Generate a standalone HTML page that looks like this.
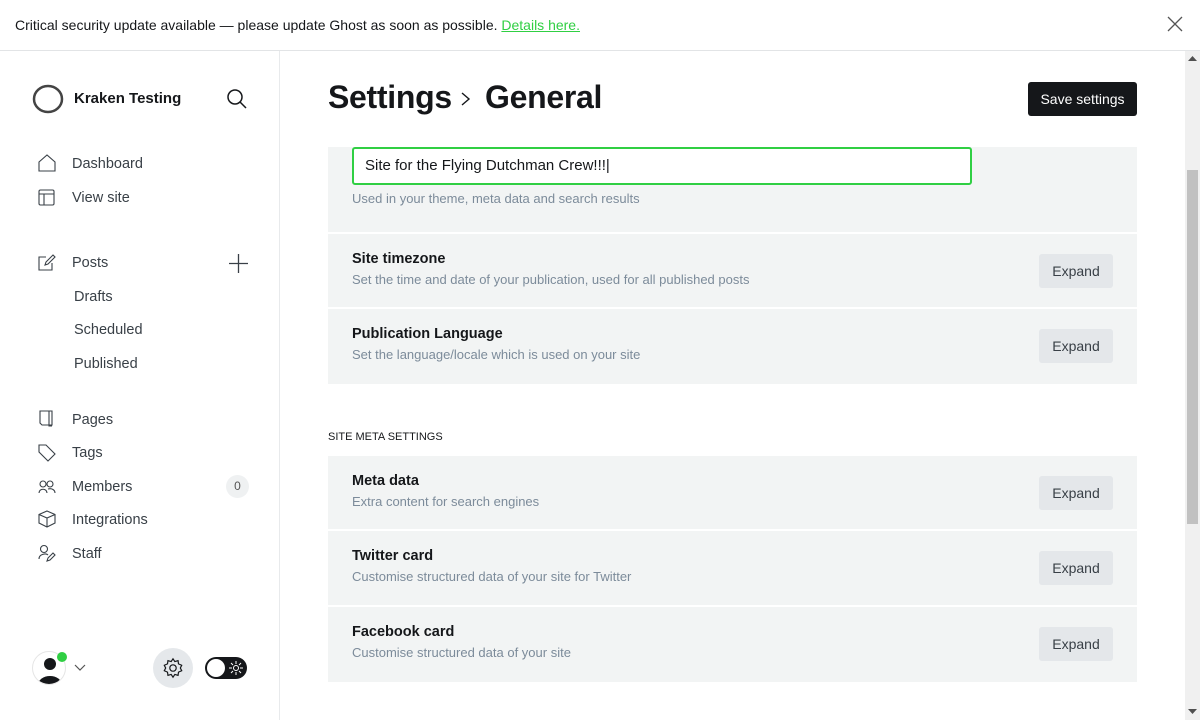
<!DOCTYPE html>
<html><head><meta charset="utf-8"><style>
*{box-sizing:border-box;margin:0;padding:0}
body{width:1200px;height:720px;overflow:hidden;background:#fff;font-family:"Liberation Sans",sans-serif;color:#15171a;position:relative}
.abs{position:absolute}
.banner{left:0;top:0;width:1200px;height:51px;border-bottom:1px solid #e2e4e6;font-size:14px;line-height:50px;padding-left:15px;color:#15171a}
.banner a{color:#30cf43;text-decoration:underline}
.side{left:0;top:51px;width:280px;height:669px;border-right:1px solid #e8eaec}
.nav{font-size:14.5px;color:#394047}
.sb{left:1185px;top:51px;width:15px;height:669px;background:#f0f0f0}
.card{left:328px;width:809px;background:#f2f4f4}
.row{position:absolute;left:0;width:809px;height:75px;border-top:2px solid #fff}
.row h4{position:absolute;left:24px;top:17px;font-size:14.5px;font-weight:bold;color:#15171a}
.row p{position:absolute;left:24px;top:38px;font-size:13px;color:#7c8b9a}
.btn{position:absolute;left:711px;top:20px;width:74px;height:34px;background:#e4e7ea;border-radius:3px;font-size:14px;line-height:34px;text-align:center;color:#394047}
</style></head><body>
<div class="abs banner">Critical security update available — please update Ghost as soon as possible. <a>Details here.</a></div>
<svg class="abs" style="left:1167px;top:16px" width="16" height="16"><path d="M1 1L15 15M15 1L1 15" stroke="#555" stroke-width="1.3"/></svg>

<div class="abs side"></div>
<svg class="abs" style="left:32px;top:84px" width="32" height="30"><ellipse cx="16" cy="15" rx="14" ry="13" fill="none" stroke="#444" stroke-width="2.5"/></svg>
<div class="abs" style="left:74px;top:90px;font-size:15px;font-weight:bold">Kraken Testing</div>
<svg class="abs" style="left:227px;top:89px" width="20" height="20"><circle cx="8" cy="8" r="7" fill="none" stroke="#15171a" stroke-width="1.5"/><path d="M13 13L19 19" stroke="#15171a" stroke-width="1.5"/></svg>

<div class="abs nav" style="left:72px;top:156px">Dashboard</div>
<svg class="abs" style="left:38px;top:154px" width="18" height="18"><path d="M1 8L9 1L17 8V17H1Z" fill="none" stroke="#394047" stroke-width="1.1"/></svg>
<div class="abs nav" style="left:72px;top:190px">View site</div>
<svg class="abs" style="left:38px;top:189px" width="18" height="18"><rect x="1" y="1" width="15" height="15" rx="1.5" fill="none" stroke="#394047" stroke-width="1.1"/><path d="M1 5H16M6 5V16" stroke="#394047" stroke-width="1.1"/></svg>
<div class="abs nav" style="left:72px;top:255px">Posts</div>
<svg class="abs" style="left:38px;top:254px" width="18" height="18"><path d="M8 3H1V16H14V9M7 11L8 8L15 1L17 3L10 10Z" fill="none" stroke="#394047" stroke-width="1.1"/></svg>
<svg class="abs" style="left:229px;top:254px" width="19" height="19"><path d="M9.5 0V19M0 9.5H19" stroke="#394047" stroke-width="1.3"/></svg>
<div class="abs nav" style="left:74px;top:289px">Drafts</div>
<div class="abs nav" style="left:74px;top:322px">Scheduled</div>
<div class="abs nav" style="left:74px;top:356px">Published</div>
<div class="abs nav" style="left:72px;top:412px">Pages</div>
<svg class="abs" style="left:39px;top:410px" width="16" height="18"><path d="M1 1H13V15H3L1 13Z M10 1V16H13" fill="none" stroke="#394047" stroke-width="1.1"/></svg>
<div class="abs nav" style="left:72px;top:445px">Tags</div>
<svg class="abs" style="left:38px;top:444px" width="18" height="18"><path d="M1 1H8L17 10L10 17L1 8Z" fill="none" stroke="#394047" stroke-width="1.1"/></svg>
<div class="abs nav" style="left:72px;top:479px">Members</div>
<svg class="abs" style="left:38px;top:479px" width="18" height="16"><circle cx="5" cy="5" r="3" fill="none" stroke="#394047" stroke-width="1.1"/><circle cx="12" cy="5" r="3" fill="none" stroke="#394047" stroke-width="1.1"/><path d="M1 14C1 9 9 9 9 14M10 10C14 9 17 11 17 14" fill="none" stroke="#394047" stroke-width="1.1"/></svg>
<div class="abs" style="left:226px;top:475px;width:23px;height:23px;border-radius:12px;background:#eff1f2;font-size:12px;text-align:center;line-height:23px;color:#555">0</div>
<div class="abs nav" style="left:72px;top:512px">Integrations</div>
<svg class="abs" style="left:38px;top:510px" width="18" height="18"><path d="M9 1L17 4.5V13L9 17L1 13V4.5Z M1 4.5L9 8L17 4.5M9 8V17" fill="none" stroke="#394047" stroke-width="1.1"/></svg>
<div class="abs nav" style="left:72px;top:546px">Staff</div>
<svg class="abs" style="left:38px;top:544px" width="18" height="18"><circle cx="6" cy="5" r="3.5" fill="none" stroke="#394047" stroke-width="1.1"/><path d="M1 15C1 10 8 9 10 11M9 17L10 14L15 9L17 11L12 16Z" fill="none" stroke="#394047" stroke-width="1.1"/></svg>

<div class="abs" style="left:32px;top:651px;width:34px;height:34px;border-radius:50%;border:1px solid #e5e5e5;overflow:hidden;background:#fff">
<svg width="34" height="34"><circle cx="17" cy="12" r="6" fill="#15171a"/><ellipse cx="17" cy="33" rx="12" ry="9" fill="#15171a"/></svg></div>
<div class="abs" style="left:57px;top:652px;width:10px;height:10px;border-radius:50%;background:#30cf43"></div>
<svg class="abs" style="left:74px;top:664px" width="12" height="8"><path d="M1 1L6 6L11 1" fill="none" stroke="#555" stroke-width="1.2"/></svg>
<div class="abs" style="left:153px;top:648px;width:40px;height:40px;border-radius:50%;background:#e5e8eb"></div>
<svg class="abs" style="left:162px;top:657px" width="22" height="22" viewBox="0 0 24 24"><path d="M12 2l2 3 3.5-1 .5 3.5L21.5 9 20 12l1.5 3-3.5 1.5-.5 3.5-3.5-1-2 3-2-3-3.5 1-.5-3.5L2.5 15 4 12 2.5 9 6 7.5 6.5 4 10 5z" fill="none" stroke="#15171a" stroke-width="1.3"/><circle cx="12" cy="12" r="3.5" fill="none" stroke="#15171a" stroke-width="1.3"/></svg>
<div class="abs" style="left:205px;top:657px;width:42px;height:22px;border-radius:11px;background:#15171a"></div>
<div class="abs" style="left:207px;top:659px;width:18px;height:18px;border-radius:50%;background:#fff"></div>
<svg class="abs" style="left:229px;top:661px" width="14" height="14"><g stroke="#fff" stroke-width="1"><circle cx="7" cy="7" r="2.5" fill="none"/><path d="M7 0V3M7 11V14M0 7H3M11 7H14M2 2L4 4M10 10L12 12M12 2L10 4M4 10L2 12"/></g></svg>

<div class="abs" style="left:328px;top:79px;font-size:32px;font-weight:bold;letter-spacing:-0.3px">Settings</div>
<svg class="abs" style="left:461px;top:92px" width="10" height="14"><path d="M1 1L8 7L1 13" fill="none" stroke="#15171a" stroke-width="1.4"/></svg>
<div class="abs" style="left:485px;top:79px;font-size:32px;font-weight:bold;letter-spacing:-0.3px">General</div>
<div class="abs" style="left:1028px;top:82px;width:109px;height:34px;background:#15171a;border-radius:3px;color:#fff;font-size:14px;line-height:34px;text-align:center">Save settings</div>

<div class="abs card" style="top:147px;height:237px">
<div class="abs" style="left:24px;top:0;width:620px;height:38px;background:#fff;border:2px solid #30cf43;border-radius:3px;font-size:15px;line-height:34px;padding-left:11px">Site for the Flying Dutchman Crew!!!|</div>
<div class="abs" style="left:24px;top:44px;font-size:13px;color:#7c8b9a">Used in your theme, meta data and search results</div>
<div class="row" style="top:85px"><h4>Site timezone</h4><p>Set the time and date of your publication, used for all published posts</p><div class="btn">Expand</div></div>
<div class="row" style="top:160px"><h4>Publication Language</h4><p>Set the language/locale which is used on your site</p><div class="btn">Expand</div></div>
</div>
<div class="abs" style="left:328px;top:431px;font-size:11px;color:#15171a">SITE META SETTINGS</div>
<div class="abs card" style="top:456px;height:226px">
<div class="row" style="top:-2px"><h4>Meta data</h4><p>Extra content for search engines</p><div class="btn">Expand</div></div>
<div class="row" style="top:73px"><h4>Twitter card</h4><p>Customise structured data of your site for Twitter</p><div class="btn">Expand</div></div>
<div class="row" style="top:149px"><h4>Facebook card</h4><p>Customise structured data of your site</p><div class="btn">Expand</div></div>
</div>

<div class="abs sb"></div>
<div class="abs" style="left:1187px;top:170px;width:11px;height:354px;background:#c1c1c1"></div>
<svg class="abs" style="left:1188px;top:56px" width="9" height="6"><path d="M0 5L4.5 0L9 5Z" fill="#505050"/></svg>
<svg class="abs" style="left:1188px;top:709px" width="9" height="6"><path d="M0 0L4.5 5L9 0Z" fill="#505050"/></svg>
</body></html>
